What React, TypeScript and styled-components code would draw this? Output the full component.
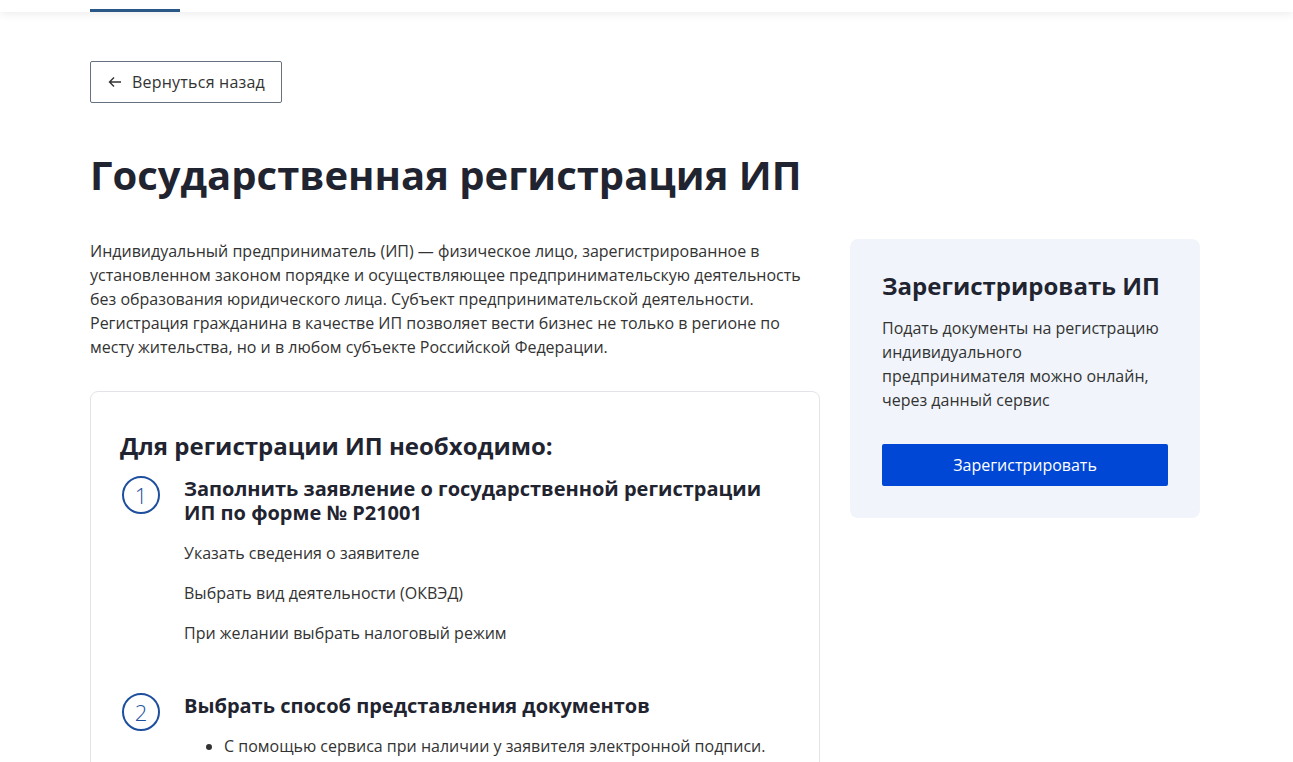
import React from "react";
import styled, { createGlobalStyle } from "styled-components";

const Global = createGlobalStyle`
  html, body { margin: 0; padding: 0; background: #fff; }
  body { font-family: "Open Sans", "Noto Sans", sans-serif; color: #333; }
  * { box-sizing: border-box; }
`;

const Header = styled.header`
  height: 12px;
  background: #fff;
  box-shadow: 0 2px 10px rgba(0, 0, 0, 0.08);
  position: relative;
  z-index: 1;
`;

const HeaderInner = styled.div`
  width: 1110px;
  margin-left: calc((100% - 1113px) / 2);
  height: 100%;
  display: flex;
  align-items: flex-end;
`;

const ActiveTab = styled.div`
  width: 90px;
  height: 3px;
  background: #2a5886;
`;

const Container = styled.main`
  width: 1110px;
  margin-left: calc((100% - 1113px) / 2);
  padding-top: 49px;
`;

const BackButton = styled.button`
  display: inline-flex;
  align-items: center;
  gap: 9px;
  height: 42px;
  padding: 0 16px 0 16px;
  background: #fff;
  border: 1px solid #66727f;
  border-radius: 2px;
  font-family: inherit;
  font-size: 16px;
  letter-spacing: 0.22px;
  color: #333;
  cursor: pointer;
`;

const Title = styled.h1`
  margin: 48px 0 40px;
  font-size: 40px;
  line-height: 48px;
  font-weight: 700;
  color: #1f2430;
`;

const Row = styled.div`
  display: grid;
  grid-template-columns: 730px 350px;
  gap: 30px;
  align-items: start;
`;

const Lead = styled.p`
  margin: 0 0 32px;
  font-size: 16px;
  line-height: 24px;
  color: #333;
`;

const StepsCard = styled.section`
  border: 1px solid #e2e4e8;
  border-radius: 8px;
  padding: 38px 29px 0;
  height: 400px;
`;

const StepsHeading = styled.h2`
  margin: 0 0 15px;
  font-size: 24px;
  line-height: 32px;
  font-weight: 700;
  color: #1f2430;
`;

const Step = styled.div<{ $gap?: number }>`
  display: grid;
  grid-template-columns: 40px 1fr;
  column-gap: 24px;
  margin-bottom: ${(p) => p.$gap ?? 0}px;
`;

const Circle = styled.div`
  width: 38px;
  height: 38px;
  margin: -1px 0 0 2px;
  border: 2px solid #1d4f9e;
  border-radius: 50%;
  display: flex;
  align-items: center;
  justify-content: center;
  font-size: 22px;
  font-weight: 300;
  color: #1d4f9e;
`;

const StepTitle = styled.h3`
  margin: 0;
  font-size: 20px;
  line-height: 24px;
  font-weight: 700;
  color: #1f2430;
`;

const SubList = styled.div`
  display: flex;
  flex-direction: column;
  gap: 16px;
  margin-top: 16px;
`;

const SubItem = styled.div`
  font-size: 16px;
  line-height: 24px;
  color: #333;
`;

const Bullets = styled.ul`
  margin: 16px 0 0;
  padding-left: 40px;
  font-size: 16px;
  line-height: 24px;
  color: #333;
`;

const SideCard = styled.aside`
  background: #f1f5fb;
  border-radius: 8px;
  padding: 31px 32px 32px;
`;

const SideTitle = styled.h2`
  margin: 0 0 14px;
  font-size: 24px;
  line-height: 32px;
  font-weight: 700;
  color: #1f2430;
`;

const SideText = styled.p`
  margin: 0 0 32px;
  font-size: 16px;
  line-height: 24px;
  color: #333;
  max-width: 280px;
`;

const PrimaryButton = styled.button`
  width: 100%;
  height: 42px;
  border: none;
  border-radius: 2px;
  background: #0147d6;
  color: #fff;
  font-family: inherit;
  font-size: 16px;
  cursor: pointer;
`;

const ArrowLeft = () => (
  <svg width="16" height="16" viewBox="0 0 16 16" fill="none" stroke="#333" strokeWidth="1.4">
    <path d="M14 8H2.5M7 3.5L2.5 8 7 12.5" />
  </svg>
);

export default function App() {
  return (
    <>
      <Global />
      <Header>
        <HeaderInner>
          <ActiveTab />
        </HeaderInner>
      </Header>
      <Container>
        <BackButton>
          <ArrowLeft />
          Вернуться назад
        </BackButton>
        <Title>Государственная регистрация ИП</Title>
        <Row>
          <div>
            <Lead>
              Индивидуальный предприниматель (ИП) — физическое лицо, зарегистрированное в
              установленном законом порядке и осуществляющее предпринимательскую деятельность
              без образования юридического лица. Субъект предпринимательской деятельности.
              Регистрация гражданина в качестве ИП позволяет вести бизнес не только в регионе по
              месту жительства, но и в любом субъекте Российской Федерации.
            </Lead>
            <StepsCard>
              <StepsHeading>Для регистрации ИП необходимо:</StepsHeading>
              <Step $gap={49}>
                <Circle>1</Circle>
                <div>
                  <StepTitle>
                    Заполнить заявление о государственной регистрации
                    <br />
                    ИП по форме № Р21001
                  </StepTitle>
                  <SubList>
                    <SubItem>Указать сведения о заявителе</SubItem>
                    <SubItem>Выбрать вид деятельности (ОКВЭД)</SubItem>
                    <SubItem>При желании выбрать налоговый режим</SubItem>
                  </SubList>
                </div>
              </Step>
              <Step>
                <Circle>2</Circle>
                <div>
                  <StepTitle>Выбрать способ представления документов</StepTitle>
                  <Bullets>
                    <li>С помощью сервиса при наличии у заявителя электронной подписи.</li>
                  </Bullets>
                </div>
              </Step>
            </StepsCard>
          </div>
          <SideCard>
            <SideTitle>Зарегистрировать ИП</SideTitle>
            <SideText>
              Подать документы на регистрацию индивидуального предпринимателя можно онлайн,
              через данный сервис
            </SideText>
            <PrimaryButton>Зарегистрировать</PrimaryButton>
          </SideCard>
        </Row>
      </Container>
    </>
  );
}
